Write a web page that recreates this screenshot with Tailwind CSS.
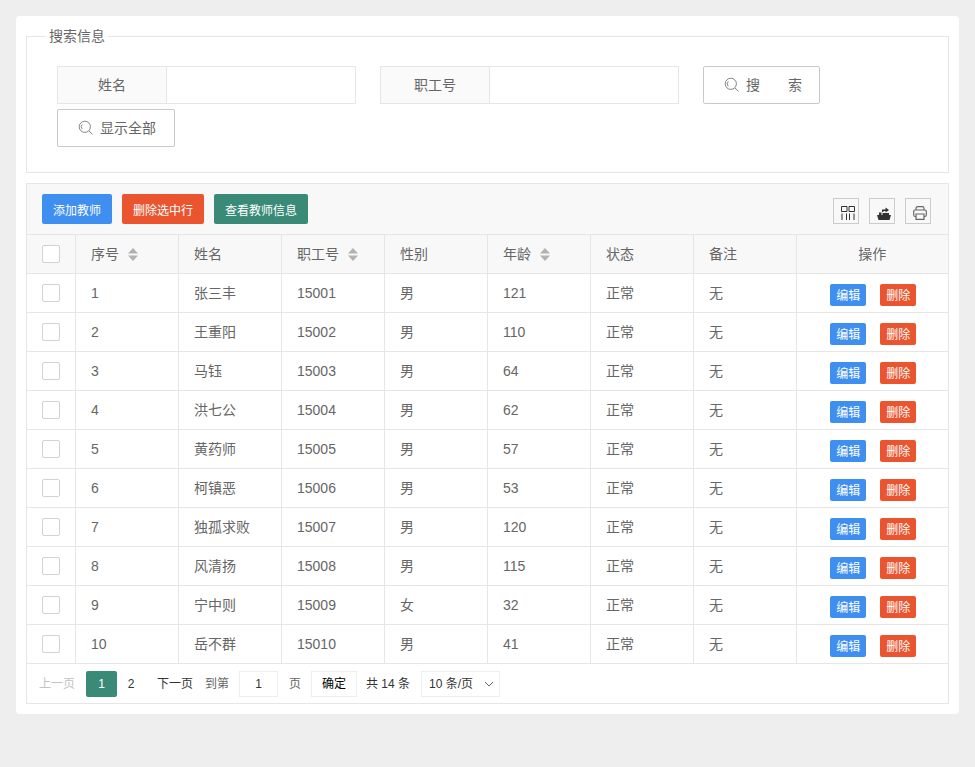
<!DOCTYPE html>
<html lang="en">
<head>
    <meta charset="UTF-8">
    <title>教师管理</title>
    <script src="https://cdn.jsdelivr.net/npm/@tailwindcss/browser@4"></script>
</head>
<body class="min-h-screen bg-[#eeeeee] p-4 font-['Liberation_Sans','Noto_Sans_CJK_SC',sans-serif] text-sm text-[#666666]">
    <div class="h-[698px] rounded bg-white p-2.5">
        <!-- search -->
        <fieldset class="h-[147px] border border-[#e6e6e6]">
            <legend class="ml-[19px] px-[3px] text-sm leading-5">搜索信息</legend>
            <div class="flex flex-wrap gap-x-6 gap-y-[5px] pt-5 pl-[30px]">
                <div class="flex h-[38px] w-[299px]">
                    <label class="flex w-[110px] items-center justify-center border border-[#e6e6e6] bg-[#fafafa]">姓名</label>
                    <input class="h-full flex-1 border border-l-0 border-[#e6e6e6] outline-none">
                </div>
                <div class="flex h-[38px] w-[299px]">
                    <label class="flex w-[110px] items-center justify-center border border-[#e6e6e6] bg-[#fafafa]">职工号</label>
                    <input class="h-full flex-1 border border-l-0 border-[#e6e6e6] outline-none">
                </div>
                <button class="flex h-[38px] w-[117px] items-center rounded-[2px] border border-[#c9c9c9] pl-5">
                    <svg class="mr-1.5 h-4 w-4" viewBox="0 0 16 16" fill="none" stroke="#777777" stroke-width="0.9"><circle cx="6.8" cy="6.8" r="5.6"/><path d="M4.2 4.4a3.6 3.6 0 0 0 0 4.8M11 11l3.600 3.400" /></svg>
                    <span>搜</span><span class="ml-7">索</span>
                </button>
                <button class="flex h-[38px] w-[118px] items-center rounded-[2px] border border-[#c9c9c9] pl-5">
                    <svg class="mr-1.5 h-4 w-4" viewBox="0 0 16 16" fill="none" stroke="#777777" stroke-width="0.9"><circle cx="6.8" cy="6.8" r="5.6"/><path d="M4.2 4.4a3.6 3.6 0 0 0 0 4.8M11 11l3.600 3.400" /></svg>
                    <span>显示全部</span>
                </button>
            </div>
        </fieldset>

        <!-- table block -->
        <div class="mt-2.5 border border-[#e6e6e6]">
            <div class="flex h-[51px] items-center border-b border-[#e6e6e6] bg-[#f8f8f8] pl-[15px] pr-[17px]">
                <button class="h-[30px] w-[70px] rounded-[2px] bg-[#3f8ff0] pt-[3px] text-xs text-white">添加教师</button>
                <button class="ml-2.5 h-[30px] w-[82px] rounded-[2px] bg-[#ea5530] pt-[3px] text-xs text-white">删除选中行</button>
                <button class="ml-2.5 h-[30px] w-[94px] rounded-[2px] bg-[#3a8a78] pt-[3px] text-xs text-white">查看教师信息</button>
                <div class="ml-auto flex gap-2.5 pt-[3px]">
                    <span class="flex h-[26px] w-[26px] items-center justify-center border border-[#cccccc]">
                        <svg class="ml-[3px] mt-1 h-3.5 w-3.5" viewBox="0 0 14 14" fill="none" stroke="#333333" stroke-width="1"><path d="M.5.5h5.500v5H.5zM8 .5h5.500v5H8zM1 7.500V14M5.500 7.500V14M8.500 7.500V14M13 7.500V14"/></svg>
                    </span>
                    <span class="flex h-[26px] w-[26px] items-center justify-center border border-[#cccccc]">
                        <svg class="ml-[3px] mt-1 h-3.5 w-3.5" viewBox="0 0 14 14" fill="#333333"><path d="M0 9h14l-1.500 5h-11zM2 6.500h2.500V9H2zM5.500 7H12v2H5.500z"/><path d="M5 6V3.500h3.500v-2L12 4 8.500 6.500V5H6.500v1z"/></svg>
                    </span>
                    <span class="flex h-[26px] w-[26px] items-center justify-center border border-[#cccccc]">
                        <svg class="ml-[3px] mt-1 h-3.5 w-3.5" viewBox="0 0 14 14" fill="none" stroke="#666666" stroke-width="1.200"><path d="M3 4V2.500Q3 .7 4.800 .7h4.400Q11 .7 11 2.500V4M3 10.500H2.200Q.7 10.500 .7 9V5.500Q.7 4 2.200 4h9.600q1.500 0 1.500 1.500V9q0 1.500-1.500 1.500H11M3 8h8v5.300H3z"/></svg>
                    </span>
                </div>
            </div>
            <table class="w-full table-fixed border-collapse">
                <colgroup>
                    <col class="w-[48px]">
                    <col span="7" class="w-[103px]">
                    <col>
                </colgroup>
                <thead class="bg-[#f8f8f8]">
                    <tr class="h-[38px]">
                        <th class="border-r border-b border-[#e6e6e6] pl-[15px] text-left font-normal"><span class="block h-[18px] w-[18px] rounded-[2px] border border-[#d2d2d2] bg-white"></span></th>
                        <th class="border-x border-b border-[#e6e6e6] pl-[15.5px] text-left font-normal"><span class="flex items-center">序号<svg class="ml-[9px] mt-px h-[13px] w-[10px]" viewBox="0 0 10 13" fill="#b2b2b2"><path d="M5 0l5 5.500H0zM5 13L0 7.500h10z"/></svg></span></th>
                        <th class="border-x border-b border-[#e6e6e6] pl-[15.5px] text-left font-normal">姓名</th>
                        <th class="border-x border-b border-[#e6e6e6] pl-[15.5px] text-left font-normal"><span class="flex items-center">职工号<svg class="ml-[9px] mt-px h-[13px] w-[10px]" viewBox="0 0 10 13" fill="#b2b2b2"><path d="M5 0l5 5.500H0zM5 13L0 7.500h10z"/></svg></span></th>
                        <th class="border-x border-b border-[#e6e6e6] pl-[15.5px] text-left font-normal">性别</th>
                        <th class="border-x border-b border-[#e6e6e6] pl-[15.5px] text-left font-normal"><span class="flex items-center">年龄<svg class="ml-[9px] mt-px h-[13px] w-[10px]" viewBox="0 0 10 13" fill="#b2b2b2"><path d="M5 0l5 5.500H0zM5 13L0 7.500h10z"/></svg></span></th>
                        <th class="border-x border-b border-[#e6e6e6] pl-[15.5px] text-left font-normal">状态</th>
                        <th class="border-x border-b border-[#e6e6e6] pl-[15.5px] text-left font-normal">备注</th>
                        <th class="border-l border-b border-[#e6e6e6] text-center font-normal">操作</th>
                    </tr>
                </thead>
                <tbody id="rows"></tbody>
            </table>
            <!-- pager -->
            <div class="flex h-[39px] items-center pt-px text-xs">
                <span class="ml-3 w-9 text-[#c2c2c2]">上一页</span>
                <span class="ml-[11px] flex h-[26px] w-[31px] items-center justify-center rounded-[2px] bg-[#3a8a78] text-white">1</span>
                <span class="w-[28px] text-center text-[#333333]">2</span>
                <span class="ml-[12px] w-9 text-[#333333]">下一页</span>
                <span class="ml-3 text-[#666666]">到第</span>
                <span class="ml-2.5 flex h-[26px] w-[39px] items-center justify-center border border-[#eeeeee] text-[#333333]">1</span>
                <span class="ml-[11px]">页</span>
                <span class="ml-2.5 flex h-[26px] w-[46px] items-center justify-center border border-[#eeeeee] pt-px text-black">确定</span>
                <span class="ml-[9px] text-[#333333]">共 14 条</span>
                <span class="ml-[11px] flex h-[26px] w-[79px] items-center border border-[#eeeeee] pl-[7px] text-[#333333]">10 条/页
                    <svg class="ml-auto mr-[5px] h-2 w-2.5" viewBox="0 0 10 8" fill="none" stroke="#666666"><path d="M1 2l4 4 4-4"/></svg>
                </span>
            </div>
        </div>
    </div>

    <script>
        const teachers = [
            ['1', '张三丰', '15001', '男', '121'],
            ['2', '王重阳', '15002', '男', '110'],
            ['3', '马钰', '15003', '男', '64'],
            ['4', '洪七公', '15004', '男', '62'],
            ['5', '黄药师', '15005', '男', '57'],
            ['6', '柯镇恶', '15006', '男', '53'],
            ['7', '独孤求败', '15007', '男', '120'],
            ['8', '风清扬', '15008', '男', '115'],
            ['9', '宁中则', '15009', '女', '32'],
            ['10', '岳不群', '15010', '男', '41'],
        ];

        const cell = 'border border-[#e6e6e6] pl-[15.5px]';
        document.getElementById('rows').innerHTML = teachers.map(t => `
            <tr class="h-[39px]">
                <td class="border-y border-r border-[#e6e6e6] pl-[15px]"><span class="block h-[18px] w-[18px] rounded-[2px] border border-[#d2d2d2]"></span></td>
                ${t.map(v => `<td class="${cell}">${v}</td>`).join('')}
                <td class="${cell}">正常</td>
                <td class="${cell}">无</td>
                <td class="border-y border-l border-[#e6e6e6]">
                    <div class="ml-[2px] flex justify-center gap-3.5 pt-[5px]">
                        <span class="flex h-[22px] w-9 items-center justify-center rounded-[2px] bg-[#3f8ff0] pt-px text-xs text-white">编辑</span>
                        <span class="flex h-[22px] w-9 items-center justify-center rounded-[2px] bg-[#ea5530] pt-px text-xs text-white">删除</span>
                    </div>
                </td>
            </tr>`).join('');
    </script>
</body>
</html>
